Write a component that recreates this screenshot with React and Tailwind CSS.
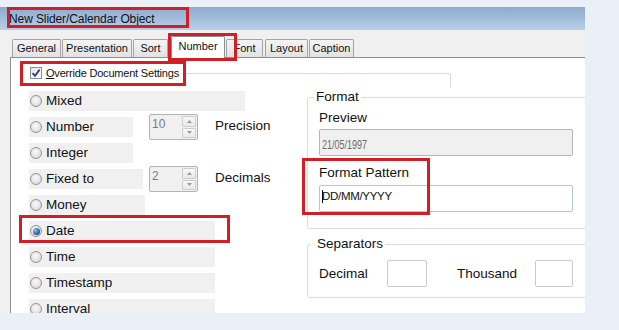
import React from "react";

const rows = [
  { label: "Mixed", w: "w-[216px]" },
  { label: "Number", w: "w-[104px]", spin: "10", after: "Precision", ml: "ml-[16px]" },
  { label: "Integer", w: "w-[104px]" },
  { label: "Fixed to", w: "w-[114px]", spin: "2", after: "Decimals", ml: "ml-[6px]" },
  { label: "Money", w: "w-[116px]" },
  { label: "Date", w: "w-[186px]", checked: true },
  { label: "Time", w: "w-[186px]" },
  { label: "Timestamp", w: "w-[186px]" },
  { label: "Interval", w: "w-[186px]" },
];

const tabs = [
  { label: "General", cls: "w-[49px]" },
  { label: "Presentation", cls: "ml-[1px] w-[70px]" },
  { label: "Sort", cls: "ml-[1px] w-[35px]" },
  { label: "Number", cls: "ml-[3px] w-[54px]", active: true },
  { label: "Font", cls: "ml-[1px] w-[37px]" },
  { label: "Layout", cls: "ml-[2px] w-[43px]" },
  { label: "Caption", cls: "ml-[1px] w-[45px]" },
];

function Radio({ checked }) {
  return (
    <div className="w-[12px] h-[12px] rounded-full border border-[#959595] bg-[radial-gradient(circle_at_45%_40%,#fbfbfb,#d2d2d2)] flex items-center justify-center shrink-0">
      {checked && (
        <div className="w-[7px] h-[7px] rounded-full bg-[radial-gradient(circle_at_35%_35%,#8cc4ee,#1a5585_70%)]" />
      )}
    </div>
  );
}

function Arrow({ up }) {
  return (
    <svg width="5" height="3" viewBox="0 0 5 3">
      {up ? <path d="M0 3 L2.5 0 L5 3 Z" fill="#9a9a9a" /> : <path d="M0 0 L2.5 3 L5 0 Z" fill="#9a9a9a" />}
    </svg>
  );
}

function Spin({ value, ml }) {
  return (
    <div className={`${ml} -my-[3px] w-[49px] h-[26px] border border-[#b3b3b3] rounded-[2px] bg-[#f0f0f0] flex shrink-0`}>
      <div className="flex-1 pl-[2px] pt-[2px] text-[12px] leading-[14px] text-[#7c7c7c]">{value}</div>
      <div className="w-[16px] flex flex-col p-px gap-px">
        <div className="flex-1 flex items-center justify-center border border-[#cdcdcd] rounded-[1px] bg-gradient-to-b from-[#f8f8f8] to-[#e9e9e9]">
          <Arrow up />
        </div>
        <div className="flex-1 flex items-center justify-center border border-[#cdcdcd] rounded-[1px] bg-gradient-to-b from-[#f8f8f8] to-[#e9e9e9]">
          <Arrow />
        </div>
      </div>
    </div>
  );
}

function RedBox({ cls }) {
  return <div className={`absolute border-[3px] border-[#d21f26] ${cls}`} />;
}

export default function App() {
  return (
    <div className="relative w-[619px] h-[330px] overflow-hidden bg-[#ebf0f8] font-['Liberation_Sans',Arial,sans-serif] text-[#111]">
      <div className="h-[7px]" />
      <div className="w-[585px] h-[306px] flex flex-col bg-[#f0f0f0]">
        {/* title bar */}
        <div className="h-[23px] pl-[9px] pt-[5px] bg-gradient-to-b from-[#8dabce] to-[#b8cfe8] text-[12px] leading-[14px] tracking-[-0.1px] text-[#111]">
          New Slider/Calendar Object
        </div>
        {/* tab strip */}
        <div className="ml-[10px] h-[28px] border-b border-[#8b8e94] flex items-end pl-[2px]">
          {tabs.map((t) =>
            t.active ? (
              <div
                key={t.label}
                className={`${t.cls} relative z-10 -mb-px h-[22px] bg-white border border-b-0 border-[#8b8e94] rounded-t-[2px] text-[11px] leading-[13px] pt-[3px] text-center`}
              >
                {t.label}
              </div>
            ) : (
              <div
                key={t.label}
                className={`${t.cls} h-[18px] bg-gradient-to-b from-[#f4f4f4] to-[#e2e2e2] border border-b-0 border-[#a3a3a3] rounded-t-[2px] text-[11px] leading-[13px] pt-[2px] text-center`}
              >
                {t.label}
              </div>
            )
          )}
        </div>
        {/* content */}
        <div className="flex-1 flex min-h-0">
          <div className="w-[10px] shrink-0" />
          <div className="flex-1 bg-white border-l border-[#8d9095] overflow-hidden flex flex-col">
            {/* header */}
            <div className="h-[33px] flex items-start shrink-0">
              <div className="h-[30px] pl-[19px] flex items-center">
                <div className="w-[12px] h-[12px] border border-[#8e8f8f] bg-gradient-to-br from-[#e6e6e6] to-[#ffffff] flex items-center justify-center">
                  <svg width="10" height="10" viewBox="0 0 10 10">
                    <path d="M1.5 5.2 L4 7.8 L8.6 1.6" fill="none" stroke="#2c3f86" strokeWidth="1.8" />
                  </svg>
                </div>
                <span className="ml-[4px] text-[11px] leading-[13px] tracking-[-0.2px]">
                  <span className="underline">O</span>verride Document Settings
                </span>
              </div>
              <div className="flex-1 ml-[5px] mr-[134px] mt-[15px] h-[15px] border-t border-r border-[#d9dde0] rounded-tr-[3px]" />
            </div>
            {/* body */}
            <div className="flex flex-1 min-h-0">
              <div className="w-[296px] shrink-0 pl-[18px] flex flex-col gap-[6px]">
                {rows.map((r) => (
                  <div key={r.label} className="flex items-center h-[20px] shrink-0">
                    <div className={`${r.w} h-[20px] bg-[#f0f0f0] flex items-center pl-[1px] shrink-0`}>
                      <Radio checked={r.checked} />
                      <span className="ml-[4px] text-[13.5px] leading-[20px] whitespace-nowrap">{r.label}</span>
                    </div>
                    {r.spin && <Spin value={r.spin} ml={r.ml} />}
                    {r.after && (
                      <span className="ml-[17px] -mt-[2px] text-[13.5px] leading-[20px]">{r.after}</span>
                    )}
                  </div>
                ))}
              </div>
              <div className="w-[300px] shrink-0 -mt-[2px] flex flex-col">
                <fieldset className="border border-[#d9dde0] rounded-[3px] pl-[11px] pb-[16px]">
                  <legend className="-ml-[5px] px-[2px] text-[13.5px] leading-[16px]">Format</legend>
                  <div className="mt-[5px] text-[13.5px] leading-[16px]">Preview</div>
                  <div className="mt-[3px] w-[254px] h-[27px] bg-[#f0f0f0] border border-[#b5b5b5] rounded-[2px] pl-[2px] pt-[2px]">
                    <span className="inline-block origin-left scale-x-[0.72] text-[12.5px] leading-[14px] text-[#6b6b6b]">21/05/1997</span>
                  </div>
                  <div className="mt-[9px] text-[13.5px] leading-[16px]">Format Pattern</div>
                  <div className="mt-[4px] w-[254px] h-[27px] bg-white border border-[#b8c4d2] rounded-[2px] pl-[2px] pt-[3px] flex items-start">
                    <span className="inline-block w-px h-[13px] bg-black -mr-px mt-[1px]" />
                    <span className="text-[11.5px] leading-[14px] tracking-[-0.3px]">DD/MM/YYYY</span>
                  </div>
                </fieldset>
                <fieldset className="mt-[7px] border border-[#d9dde0] rounded-[3px] pl-[11px] pb-[10px]">
                  <legend className="-ml-[8px] pl-[6px] pr-[2px] text-[13.5px] leading-[16px]">Separators</legend>
                  <div className="mt-[8px] h-[27px] flex items-center">
                    <span className="w-[68px] text-[13.5px] leading-[16px]">Decimal</span>
                    <div className="w-[40px] h-[27px] border border-[#cbcbcb] rounded-[2px] bg-white" />
                    <span className="ml-[30px] w-[78px] text-[13.5px] leading-[16px]">Thousand</span>
                    <div className="w-[38px] h-[27px] border border-[#cbcbcb] rounded-[2px] bg-white" />
                  </div>
                </fieldset>
              </div>
            </div>
          </div>
        </div>
      </div>

      {/* annotation overlays */}
      <RedBox cls="left-[7px] top-[7px] w-[182px] h-[21px]" />
      <RedBox cls="left-[168px] top-[33px] w-[69px] h-[28px]" />
      <RedBox cls="left-[20px] top-[61px] w-[166px] h-[25px]" />
      <RedBox cls="left-[19px] top-[215px] w-[211px] h-[28px]" />
      <RedBox cls="left-[302px] top-[158px] w-[128px] h-[57px]" />
    </div>
  );
}
